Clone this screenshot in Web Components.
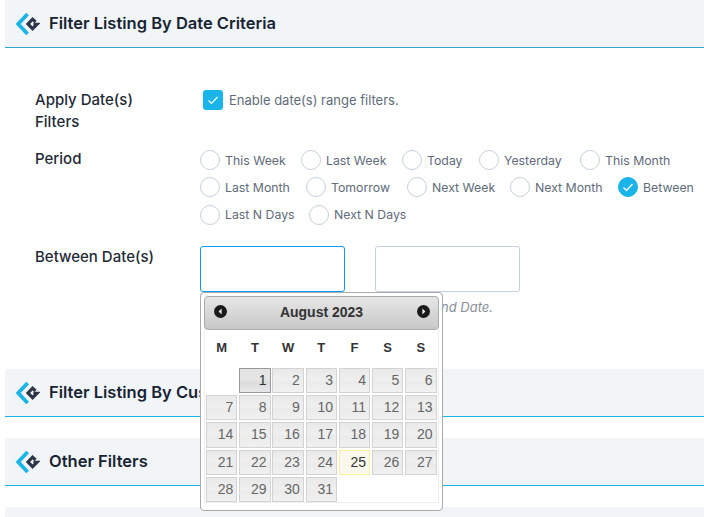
<!DOCTYPE html>
<html>
<head>
<meta charset="utf-8">
<title>Filters</title>
<style>
    html, body { margin: 0; padding: 0; overflow: hidden; height: 100%; background: #fff; }
    body { font-family: "Inter", "Noto Sans", sans-serif; padding-left: 5px; }
</style>
</head>
<body>

<section-head class="first">Filter Listing By Date Criteria</section-head>
<form-panel>
    <form-row label="Apply Date(s) Filters">
        <check-option checked>Enable date(s) range filters.</check-option>
    </form-row>
    <form-row label="Period">
        <radio-group>
            <radio-option w="101">This Week</radio-option>
            <radio-option w="101">Last Week</radio-option>
            <radio-option w="77">Today</radio-option>
            <radio-option w="101">Yesterday</radio-option>
            <radio-option w="100">This Month</radio-option>
            <radio-option w="106">Last Month</radio-option>
            <radio-option w="101">Tomorrow</radio-option>
            <radio-option w="103">Next Week</radio-option>
            <radio-option w="108">Next Month</radio-option>
            <radio-option w="80" checked>Between</radio-option>
            <radio-option w="109">Last N Days</radio-option>
            <radio-option w="100">Next N Days</radio-option>
        </radio-group>
    </form-row>
    <form-row label="Between Date(s)">
        <date-range hint="Please select the Start Date and End Date."></date-range>
    </form-row>
</form-panel>
<section-head class="second">Filter Listing By Custom Fields</section-head>
<section-head class="third">Other Filters</section-head>
<section-head class="fourth"></section-head>

<script>
class SectionHead extends HTMLElement {
    constructor() {
        super()
        let empty = !this.textContent.trim()
        this.attachShadow({ mode: "open" }).innerHTML = `
        <style>
            :host {
                display: flex;
                align-items: center;
                gap: 9px;
                height: 47px;
                padding-left: 10px;
                background: #f2f5f8;
                border-bottom: 1px solid #19b5e8;
                color: #182433;
                font-size: 16.5px;
                font-weight: 600;
            }
            :host(.first) { border-bottom-color: #2fa6cf; }
            :host(.third) { margin-top: 21px; }
            /* only the top of this one is in the window */
            :host(.fourth) { margin-top: 21px; height: 11px; border-bottom: 0; }
            svg { flex: none; width: 25px; height: 26px; }
            .title { margin-top: -2px; }
        </style>
        ${empty ? "" : `<svg viewBox="0 0 25 26" aria-hidden="true">
            <path d="M12.6 3 3.2 13 12.6 23" fill="none" stroke="#19b5e8" stroke-width="3.8"/>
            <path d="M20.6 10.9 17.6 8.2 13 13 17.6 17.7 22 13.3 18.4 13.3" fill="none" stroke="#2c3648" stroke-width="3.2"/>
        </svg>`}
        <span class="title"><slot></slot></span>`
    }
}

class FormPanel extends HTMLElement {
    constructor() {
        super()
        this.attachShadow({ mode: "open" }).innerHTML = `
        <style>
            :host {
                display: flex;
                flex-direction: column;
                gap: 15px;
                height: 280px;
                padding: 41px 0 0 30px;
            }
        </style>
        <slot></slot>`
    }
}

class FormRow extends HTMLElement {
    constructor() {
        super()
        this.attachShadow({ mode: "open" }).innerHTML = `
        <style>
            :host {
                display: grid;
                grid-template-columns: 165px 1fr;
            }
            .label {
                width: 128px;
                color: #1f2a37;
                font-size: 15px;
                font-weight: 500;
                line-height: 22px;
            }
        </style>
        <div class="label">${this.getAttribute("label")}</div>
        <div><slot></slot></div>`
    }
}

class CheckOption extends HTMLElement {
    constructor() {
        super()
        this.attachShadow({ mode: "open" }).innerHTML = `
        <style>
            :host {
                display: flex;
                align-items: center;
                gap: 6px;
                height: 22px;
                margin-left: 3px;
                color: #5f6b7a;
                font-size: 13px;
            }
            .box {
                width: 20px;
                height: 20px;
                border-radius: 3px;
                background: #19b5e8;
                display: flex;
                align-items: center;
                justify-content: center;
            }
        </style>
        <span class="box">
            <svg width="12" height="12" viewBox="0 0 12 12"><path d="M1.5 6.5 4.5 9.5 10.5 3" fill="none" stroke="#fff" stroke-width="1.2"/></svg>
        </span>
        <slot></slot>`
    }
}

class RadioGroup extends HTMLElement {
    constructor() {
        super()
        this.attachShadow({ mode: "open" }).innerHTML = `
        <style>
            :host {
                display: flex;
                flex-wrap: wrap;
                row-gap: 7.4px;
                margin: 2px 0 6px;
            }
        </style>
        <slot></slot>`
    }
}

class RadioOption extends HTMLElement {
    constructor() {
        super()
        let on = this.hasAttribute("checked")
        this.attachShadow({ mode: "open" }).innerHTML = `
        <style>
            :host {
                display: flex;
                align-items: center;
                gap: 5px;
                height: 20px;
                width: ${this.getAttribute("w")}px;
                color: #5f6b7a;
                font-size: 12.3px;
                white-space: nowrap;
            }
            .dot {
                flex: none;
                box-sizing: border-box;
                width: 20px;
                height: 20px;
                border-radius: 50%;
                border: 1px solid #c5d0dc;
                background: #fff;
                display: flex;
                align-items: center;
                justify-content: center;
            }
            .dot.on { background: #19b5e8; border-color: #19b5e8; }
        </style>
        <span class="dot ${on ? "on" : ""}">
            ${on ? `<svg width="12" height="12" viewBox="0 0 12 12"><path d="M1.5 6.5 4.5 9.5 10.5 3" fill="none" stroke="#fff" stroke-width="1.3"/></svg>` : ""}
        </span>
        <slot></slot>`
    }
}

class DateRange extends HTMLElement {
    constructor() {
        super()
        this.attachShadow({ mode: "open" }).innerHTML = `
        <style>
            :host {
                display: block;
                position: relative;
            }
            .fields {
                display: flex;
                gap: 30px;
            }
            .field {
                box-sizing: border-box;
                width: 145px;
                height: 46px;
                border: 1px solid #c5d0dc;
                border-radius: 3px;
                background: #fff;
            }
            .field.focus { border-color: #0a9bf5; }
            .hint {
                width: 293px;
                margin-top: 6px;
                color: #8a8f98;
                font-size: 13px;
                font-style: italic;
                line-height: 18px;
                text-align: right;
                white-space: nowrap;
            }
            month-picker {
                position: absolute;
                top: 46px;
                left: 0;
                z-index: 5;
            }
        </style>
        <div class="fields">
            <div class="field focus"></div>
            <div class="field"></div>
        </div>
        <div class="hint">${this.getAttribute("hint")}</div>
        <month-picker first="2" days="31" today="25" active="1">August 2023</month-picker>`
    }
}

class MonthPicker extends HTMLElement {
    constructor() {
        super()
        let cells = ""
        let first = parseInt(this.getAttribute("first"))
        let days = parseInt(this.getAttribute("days"))
        let today = this.getAttribute("today")
        let active = this.getAttribute("active")
        for (let i = 1; i < first; i++) {
            cells += `<span></span>`
        }
        for (let d = 1; d <= days; d++) {
            let cls = d == today ? "day today" : d == active ? "day active" : "day"
            cells += `<span class="${cls}">${d}</span>`
        }
        let names = ["M", "T", "W", "T", "F", "S", "S"].map(n => `<b>${n}</b>`).join("")
        this.attachShadow({ mode: "open" }).innerHTML = `
        <style>
            :host {
                display: block;
                box-sizing: border-box;
                width: 243px;
                height: 219px;
                padding: 3px;
                background: #fff;
                border: 1px solid #aaa;
                border-radius: 4px;
                font-family: "Liberation Sans", Arial, sans-serif;
            }
            .title {
                display: flex;
                align-items: center;
                justify-content: space-between;
                box-sizing: border-box;
                height: 34px;
                padding: 0 8.5px 2px;
                border: 1px solid #aaa;
                border-radius: 4px;
                background: linear-gradient(#e6e6e6, #c8c8c8);
                color: #333;
                font-size: 14px;
                font-weight: bold;
            }
            .body {
                box-sizing: border-box;
                height: 173px;
                padding: 0 1px;
                border: 1px solid #eee;
                border-top: 0;
            }
            .names, .days {
                display: grid;
                grid-template-columns: repeat(7, 31.4px);
                column-gap: 1.8px;
            }
            .names {
                box-sizing: border-box;
                height: 38px;
                padding-bottom: 2px;
                align-items: center;
                justify-items: center;
                color: #333;
                font-size: 13px;
            }
            .days {
                grid-auto-rows: 25.4px;
                row-gap: 1.9px;
                font-size: 14px;
            }
            .day {
                box-sizing: border-box;
                padding: 2px 3px 0 0;
                border: 1px solid #d3d3d3;
                background: linear-gradient(#e9e9e9 0, #efefef 45%, #ebebeb 60%, #f1f1f1 100%);
                color: #666;
                text-align: right;
                line-height: 19px;
            }
            .day.active {
                border-color: #999;
                background: linear-gradient(#e4e4e4 0, #e4e4e4 45%, #dcdcdc 60%, #e8e8e8 100%);
                color: #333;
            }
            .day.today {
                border-color: #fcefa1;
                background: #fbf9ee;
                color: #363636;
            }
            svg { display: block; }
        </style>
        <div class="title">
            <svg width="13" height="13" viewBox="0 0 13 13"><circle cx="6.5" cy="6.5" r="6.5" fill="#1a1a1a"/><path d="M7.6 3.6 4.6 6.5 7.6 9.4Z" fill="#eee"/></svg>
            <slot></slot>
            <svg width="13" height="13" viewBox="0 0 13 13"><circle cx="6.5" cy="6.5" r="6.5" fill="#1a1a1a"/><path d="M5.4 3.6 8.4 6.5 5.4 9.4Z" fill="#eee"/></svg>
        </div>
        <div class="body">
            <div class="names">${names}</div>
            <div class="days">${cells}</div>
        </div>`
    }
}

customElements.define("section-head", SectionHead)
customElements.define("form-panel", FormPanel)
customElements.define("form-row", FormRow)
customElements.define("check-option", CheckOption)
customElements.define("radio-group", RadioGroup)
customElements.define("radio-option", RadioOption)
customElements.define("date-range", DateRange)
customElements.define("month-picker", MonthPicker)
</script>
</body>
</html>
